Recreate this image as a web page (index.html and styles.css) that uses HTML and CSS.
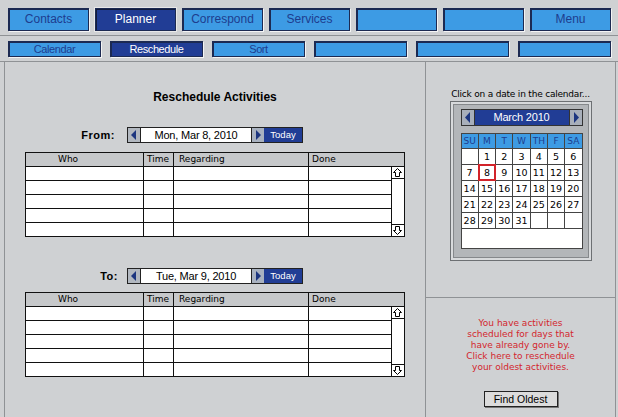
FILE: index.html
```html
<!DOCTYPE html>
<html lang="en">
<head>
  <meta charset="UTF-8">
  <meta name="viewport" content="width=device-width, initial-scale=1.0">
  <title>Planner - Reschedule</title>
  <link rel="stylesheet" href="styles.css">
</head>
<body>
  <div class="topnav">
    <span class="tab">Contacts</span>
    <span class="tab active">Planner</span>
    <span class="tab">Correspond</span>
    <span class="tab">Services</span>
    <span class="tab"></span>
    <span class="tab"></span>
    <span class="tab">Menu</span>
  </div>

  <div class="subnav">
    <span class="sub">Calendar</span>
    <span class="sub active">Reschedule</span>
    <span class="sub">Sort</span>
    <span class="sub"></span>
    <span class="sub"></span>
    <span class="sub"></span>
  </div>

  <div class="main">
    <div class="left">
      <h1 class="title">Reschedule Activities</h1>

      <div class="daterow first">
        <span class="label">From:</span>
        <div class="picker">
          <span class="arr prev"><svg width="12" height="14" viewBox="0 0 12 14"><polygon points="8,2 8,12 3,7" fill="#1d3680"/></svg></span>
          <span class="date">Mon, Mar 8, 2010</span>
          <span class="arr next"><svg width="12" height="14" viewBox="0 0 12 14"><polygon points="4,2 4,12 9,7" fill="#1d3680"/></svg></span>
          <span class="today">Today</span>
        </div>
      </div>

      <div class="grid first-grid">
        <div class="ghead">
          <span class="c-who">Who</span>
          <span class="c-time">Time</span>
          <span class="c-reg">Regarding</span>
          <span class="c-done">Done</span>
        </div>
        <div class="gbody">
          <div class="rows">
            <div class="row"><span></span><span></span><span></span><span></span></div>
            <div class="row"><span></span><span></span><span></span><span></span></div>
            <div class="row"><span></span><span></span><span></span><span></span></div>
            <div class="row"><span></span><span></span><span></span><span></span></div>
            <div class="row"><span></span><span></span><span></span><span></span></div>
          </div>
          <div class="scroll">
            <div class="sb-up"><svg width="11" height="11" viewBox="0 0 11 11"><polygon points="5.5,1.5 9.5,5.5 7.5,5.5 7.5,9.5 3.5,9.5 3.5,5.5 1.5,5.5" fill="#fff" stroke="#000" stroke-width="1"/></svg></div>
            <div class="sb-down"><svg width="11" height="11" viewBox="0 0 11 11"><polygon points="5.5,9.5 9.5,5.5 7.5,5.5 7.5,1.5 3.5,1.5 3.5,5.5 1.5,5.5" fill="#fff" stroke="#000" stroke-width="1"/></svg></div>
          </div>
        </div>
      </div>

      <div class="daterow second">
        <span class="label">To:</span>
        <div class="picker">
          <span class="arr prev"><svg width="12" height="14" viewBox="0 0 12 14"><polygon points="8,2 8,12 3,7" fill="#1d3680"/></svg></span>
          <span class="date">Tue, Mar 9, 2010</span>
          <span class="arr next"><svg width="12" height="14" viewBox="0 0 12 14"><polygon points="4,2 4,12 9,7" fill="#1d3680"/></svg></span>
          <span class="today">Today</span>
        </div>
      </div>

      <div class="grid second-grid">
        <div class="ghead">
          <span class="c-who">Who</span>
          <span class="c-time">Time</span>
          <span class="c-reg">Regarding</span>
          <span class="c-done">Done</span>
        </div>
        <div class="gbody">
          <div class="rows">
            <div class="row"><span></span><span></span><span></span><span></span></div>
            <div class="row"><span></span><span></span><span></span><span></span></div>
            <div class="row"><span></span><span></span><span></span><span></span></div>
            <div class="row"><span></span><span></span><span></span><span></span></div>
            <div class="row"><span></span><span></span><span></span><span></span></div>
          </div>
          <div class="scroll">
            <div class="sb-up"><svg width="11" height="11" viewBox="0 0 11 11"><polygon points="5.5,1.5 9.5,5.5 7.5,5.5 7.5,9.5 3.5,9.5 3.5,5.5 1.5,5.5" fill="#fff" stroke="#000" stroke-width="1"/></svg></div>
            <div class="sb-down"><svg width="11" height="11" viewBox="0 0 11 11"><polygon points="5.5,9.5 9.5,5.5 7.5,5.5 7.5,1.5 3.5,1.5 3.5,5.5 1.5,5.5" fill="#fff" stroke="#000" stroke-width="1"/></svg></div>
          </div>
        </div>
      </div>
    </div>

    <div class="right">
      <div class="cal-area">
        <p class="hint">Click on a date in the calendar...</p>
        <div class="calframe">
          <div class="calinner">
            <div class="calmonth">
              <span class="carr"><svg width="12" height="15" viewBox="0 0 12 15"><polygon points="8,2 8,13 3,7.5" fill="#1d3680"/></svg></span>
              <span class="month">March 2010</span>
              <span class="carr right-arr"><svg width="12" height="15" viewBox="0 0 12 15"><polygon points="4,2 4,13 9,7.5" fill="#1d3680"/></svg></span>
            </div>
            <div class="calgrid">
              <div class="days">
                <span class="dh">SU</span><span class="dh">M</span><span class="dh">T</span><span class="dh">W</span><span class="dh">TH</span><span class="dh">F</span><span class="dh">SA</span>
                <span class="d"></span><span class="d">1</span><span class="d">2</span><span class="d">3</span><span class="d">4</span><span class="d">5</span><span class="d">6</span>
                <span class="d">7</span><span class="d sel">8</span><span class="d">9</span><span class="d">10</span><span class="d">11</span><span class="d">12</span><span class="d">13</span>
                <span class="d">14</span><span class="d">15</span><span class="d">16</span><span class="d">17</span><span class="d">18</span><span class="d">19</span><span class="d">20</span>
                <span class="d">21</span><span class="d">22</span><span class="d">23</span><span class="d">24</span><span class="d">25</span><span class="d">26</span><span class="d">27</span>
                <span class="d">28</span><span class="d">29</span><span class="d">30</span><span class="d">31</span><span class="d"></span><span class="d"></span><span class="d"></span>
              </div>
            </div>
          </div>
        </div>
      </div>

      <div class="alert">
        <p>You have activities<br>scheduled for days that<br>have already gone by.<br>Click here to reschedule<br>your oldest activities.</p>
        <span class="find-btn">Find Oldest</span>
      </div>
    </div>
  </div>
</body>
</html>
```

FILE: styles.css
```css
* {
  box-sizing: border-box;
  margin: 0;
  padding: 0;
}

html, body {
  background: #cfd1d3;
  font-family: "Liberation Sans", Arial, sans-serif;
  color: #000;
}

body {
  width: 618px;
  height: 417px;
  overflow: hidden;
}

/* top tabs */
.topnav {
  display: flex;
  gap: 6px;
  padding: 8px 7px 4px 8px;
  border-bottom: 1px solid #8f9295;
}

.tab {
  flex: 1;
  height: 23px;
  line-height: 20px;
  text-align: center;
  font-size: 12px;
  color: #1d3d8f;
  background: #3d9be4;
  border: 1px solid #1c2a52;
  box-shadow: inset 1px 1px 0 #1c2a52, 1px 1px 0 #f4f4f4;
}

.tab.active {
  background: #213d95;
  color: #fff;
  box-shadow: inset 1px 1px 0 #131d3c, 0 0 0 1px #e8e8e8;
}

.subnav {
  display: flex;
  gap: 9px;
  padding: 5px 7px 4px 8px;
  border-bottom: 1px solid #8f9295;
}

.sub {
  flex: 1;
  height: 16px;
  line-height: 14px;
  text-align: center;
  font-size: 11px;
  letter-spacing: -0.4px;
  color: #1d3d8f;
  background: #3d9be4;
  border: 1px solid #1c2a52;
  box-shadow: inset 1px 1px 0 #1c2a52, 1px 1px 0 #f4f4f4;
}

.sub.active {
  background: #213d95;
  color: #fff;
}

/* panels */
.main {
  display: flex;
  padding-left: 4px;
  height: 355px;
}

.left {
  width: 421px;
  border-left: 1px solid #8f9295;
}

.right {
  width: 191px;
  border-left: 1px solid #8f9295;
  border-right: 1px solid #8f9295;
  display: flex;
  flex-direction: column;
}

.title {
  margin-top: 28px;
  font-size: 12px;
  line-height: 14px;
  font-weight: bold;
  text-align: center;
}

/* date pickers */
.daterow {
  display: flex;
  align-items: center;
  margin-left: 20px;
}

.daterow.first {
  margin-top: 23px;
}

.daterow.second {
  margin-top: 31px;
}

.label {
  width: 93px;
  margin-right: 9px;
  text-align: right;
  font-size: 11px;
  font-weight: bold;
  letter-spacing: 0.5px;
}

.first .label {
  padding-right: 3px;
}

.picker {
  display: flex;
  height: 16px;
  border: 1px solid #222;
}

.arr {
  width: 13px;
  background: #b2b8c0;
  display: flex;
}

.arr.prev {
  border-right: 1px solid #222;
}

.arr.next {
  border-left: 1px solid #222;
  background: #a9b2c0;
}

.date {
  width: 110px;
  background: #fff;
  font-size: 11px;
  letter-spacing: -0.2px;
  line-height: 14px;
  text-align: center;
}

.today {
  width: 38px;
  background: #213d95;
  color: #fff;
  font-size: 9.5px;
  line-height: 14px;
  text-align: center;
}

/* activity tables */
.grid {
  width: 380px;
  margin: 9px auto 0;
  border: 1px solid #111;
  background: #fff;
}

.second-grid {
  margin-top: 8px;
}

.ghead {
  display: flex;
  height: 14px;
  border-bottom: 1px solid #111;
  background: #c6c8ca;
  font-family: "DejaVu Sans", sans-serif;
  font-size: 9px;
  line-height: 13px;
}

.ghead span {
  padding-left: 3px;
  border-right: 1px solid #111;
}

.ghead .c-who {
  width: 118px;
  padding-left: 32px;
}

.ghead .c-time {
  width: 30px;
}

.ghead .c-reg {
  width: 135px;
  padding-left: 5px;
}

.ghead .c-done {
  flex: 1;
  border-right: none;
}

.gbody {
  display: flex;
}

.rows {
  width: 366px;
}

.row {
  display: flex;
  height: 14px;
  border-bottom: 1px solid #111;
}

.row:last-child {
  height: 13px;
  border-bottom: none;
}

.row span {
  border-right: 1px solid #111;
}

.row span:nth-child(1) { width: 118px; }
.row span:nth-child(2) { width: 30px; }
.row span:nth-child(3) { width: 135px; }
.row span:nth-child(4) { width: 83px; }

.scroll {
  width: 12px;
  display: flex;
  flex-direction: column;
  justify-content: space-between;
}

.sb-up {
  height: 12px;
  border-bottom: 1px solid #111;
}

.sb-down {
  height: 12px;
  border-top: 1px solid #111;
}

.scroll svg {
  display: block;
}

/* calendar */
.cal-area {
  height: 236px;
  border-bottom: 1px solid #8f9295;
}

.hint {
  padding-top: 26px;
  font-family: "DejaVu Sans", sans-serif;
  font-size: 9px;
  letter-spacing: -0.2px;
  line-height: 12px;
  text-align: center;
}

.calframe {
  width: 142px;
  height: 160px;
  margin: 1px auto 0;
  padding: 2px;
  border: 1px solid #6d7073;
  background: #d8dadc;
}

.calinner {
  height: 154px;
  padding: 4px 5px 0 7px;
  border: 1px solid #85888b;
  background: #b3b6b9;
}

.calmonth {
  display: flex;
  height: 17px;
  border: 1px solid #333;
}

.carr {
  width: 13px;
  background: #a8afba;
  border-right: 1px solid #333;
  display: flex;
}

.carr.right-arr {
  border-right: none;
  border-left: 1px solid #333;
}

.month {
  flex: 1;
  background: #213d95;
  color: #fff;
  font-size: 11px;
  letter-spacing: -0.2px;
  line-height: 15px;
  text-align: center;
}

.calgrid {
  margin-top: 7px;
  height: 116px;
  border: 1px solid #444;
  background: #fff;
}

.days {
  display: grid;
  grid-template-columns: repeat(7, 1fr);
  grid-template-rows: 14px repeat(5, 15px);
  gap: 1px;
  background: #444;
  border-bottom: 1px solid #444;
  font-family: "DejaVu Sans", sans-serif;
  font-size: 9px;
  text-align: center;
}

.dh {
  background: #3d9be4;
  color: #1d3d8f;
  line-height: 14px;
}

.d {
  background: #fff;
  font-size: 9.5px;
  line-height: 15px;
}

.d.sel {
  outline: 2px solid #d2232a;
  outline-offset: -1px;
}

/* overdue notice */
.alert {
  flex: 1;
  padding-top: 20px;
  text-align: center;
}

.alert p {
  color: #d3262e;
  font-family: "DejaVu Sans", sans-serif;
  font-size: 9px;
  line-height: 11px;
}

.find-btn {
  display: inline-block;
  width: 74px;
  height: 16px;
  margin-top: 18px;
  border: 1px solid #222;
  background: #dcdcdc;
  box-shadow: 1px 1px 0 #777;
  font-size: 10.5px;
  line-height: 14px;
}
```
